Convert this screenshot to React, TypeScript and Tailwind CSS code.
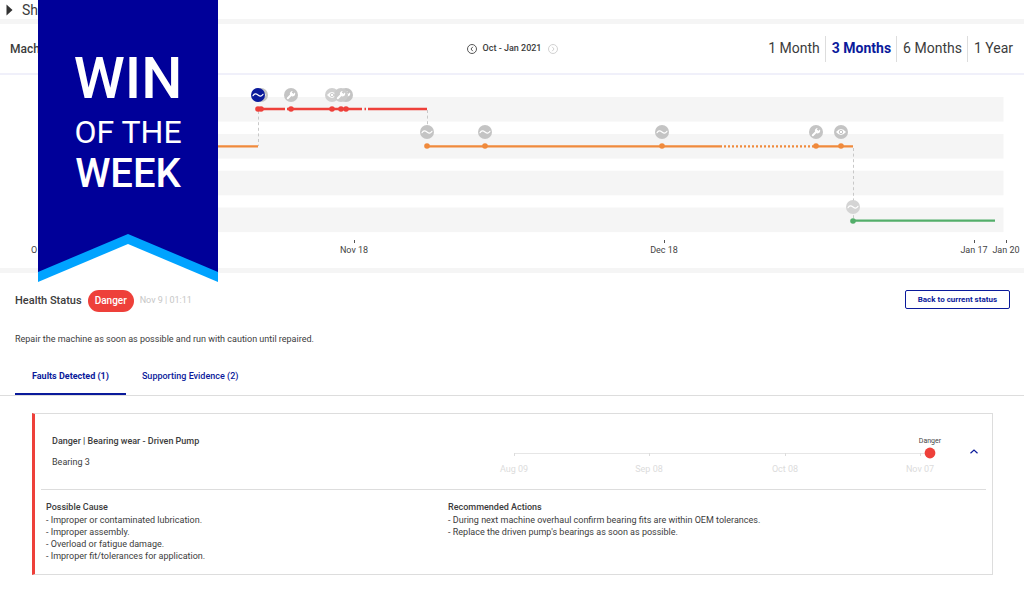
import { useState } from "react";

type MarkerKind = "wave" | "wrench" | "eye";

const RANGES = ["1 Month", "3 Months", "6 Months", "1 Year"];

const MARKERS: { x: number; y: number; kind: MarkerKind; fill: string }[] = [
    { x: 261, y: 20, kind: "eye", fill: "#c4c4c4" },
    { x: 258, y: 20, kind: "wave", fill: "#0a1a9b" },
    { x: 291, y: 20, kind: "wrench", fill: "#c4c4c4" },
    { x: 332, y: 20, kind: "eye", fill: "#d0d0d0" },
    { x: 346, y: 20, kind: "wrench", fill: "#c4c4c4" },
    { x: 341, y: 20, kind: "wrench", fill: "#cbcbcb" },
    { x: 427, y: 57, kind: "wave", fill: "#c4c4c4" },
    { x: 485, y: 57, kind: "wave", fill: "#c4c4c4" },
    { x: 662, y: 57, kind: "wave", fill: "#c4c4c4" },
    { x: 816, y: 57, kind: "wrench", fill: "#c4c4c4" },
    { x: 841, y: 57, kind: "eye", fill: "#c4c4c4" },
    { x: 853, y: 132, kind: "wave", fill: "#d4d4d4" },
];

const POINTS = [
    { x: 258, y: 34, fill: "#ee403a" },
    { x: 261, y: 34, fill: "#ee403a" },
    { x: 291, y: 34, fill: "#ee403a" },
    { x: 332, y: 34, fill: "#ee403a" },
    { x: 341, y: 34, fill: "#ee403a" },
    { x: 346, y: 34, fill: "#ee403a" },
    { x: 427, y: 71, fill: "#f08a3c" },
    { x: 485, y: 71, fill: "#f08a3c" },
    { x: 662, y: 71, fill: "#f08a3c" },
    { x: 816, y: 71, fill: "#f08a3c" },
    { x: 841, y: 71, fill: "#f08a3c" },
    { x: 853, y: 146, fill: "#53ae6a" },
];

const TICKS = [
    { x: 354, label: "Nov 18" },
    { x: 664, label: "Dec 18" },
    { x: 974, label: "Jan 17" },
    { x: 1006, label: "Jan 20" },
];

const FAULT_TICKS = [
    { x: 24, label: "Aug 09" },
    { x: 159, label: "Sep 08" },
    { x: 295, label: "Oct 08" },
    { x: 430, label: "Nov 07" },
];

function Marker({ x, y, kind, fill }: { x: number; y: number; kind: MarkerKind; fill: string }) {
    return (
        <g transform={`translate(${x} ${y})`}>
            <circle r="7" fill={fill} />
            {kind === "wave" && <path d="M-5 .7C-3.6-1.6-2-1.6 0 0S3.6 1.6 5-.7" fill="none" stroke="#fff" strokeWidth="1.2" strokeLinecap="round" />}
            {kind === "wrench" && (
                <>
                    <path d="M-3.2 3.2 1 -1" stroke="#fff" strokeWidth="2" strokeLinecap="round" />
                    <path d="M3.9-2.6A2.7 2.7 0 1 1 1.6-4L.9-2.2 2.1-1Z" fill="#fff" />
                </>
            )}
            {kind === "eye" && (
                <>
                    <path d="M-5 0Q0-6 5 0Q0 6-5 0Z" fill="#fff" />
                    <circle r="1.7" fill="none" stroke={fill} strokeWidth="1" />
                </>
            )}
        </g>
    );
}

function HealthChart() {
    return (
        <svg viewBox="0 0 1024 193" className="block w-full" fontFamily="Roboto, sans-serif" fontSize="9">
            {[22, 59, 95.7, 132.5].map((y) => (
                <rect key={y} x="40" y={y} width="963.5" height="24.6" fill="#f5f5f5" />
            ))}
            <g stroke="#c8c8c8" strokeWidth="1" strokeDasharray="3 2.6">
                <path d="M258.5 36V71" />
                <path d="M427.5 35V50" />
                <path d="M853.5 73V144" />
            </g>
            <g fill="none" strokeWidth="2.3">
                <path d="M40 71.3H258" stroke="#f08a3c" />
                <path d="M258 34H285M287 34H362M364.5 34H366M368 34H427" stroke="#ee403a" />
                <path d="M427 71.3H722M816 71.3H853" stroke="#f08a3c" />
                <path d="M724 71.3H815" stroke="#f08a3c" strokeDasharray="2 2" />
                <path d="M853 145.7H995" stroke="#53ae6a" />
            </g>
            {POINTS.map((p) => (
                <circle key={`${p.x}-${p.y}`} cx={p.x} cy={p.y} r="2.8" fill={p.fill} />
            ))}
            {MARKERS.map((m) => (
                <Marker key={`${m.x}-${m.y}`} {...m} />
            ))}
            <text x="31" y="178" fill="#444">O</text>
            {TICKS.map((t) => (
                <g key={t.label}>
                    <path d={`M${t.x + 0.5} 165V168`} stroke="#555" />
                    <text x={t.x} y="178" fill="#444" textAnchor="middle">{t.label}</text>
                </g>
            ))}
        </svg>
    );
}

function FaultTimeline() {
    return (
        <svg viewBox="0 0 460 50" className="mt-1 block w-[460px]" fontFamily="Roboto, sans-serif" fontSize="9">
            <path d="M24 24.5H440" stroke="#e6e6e6" />
            {FAULT_TICKS.map((t) => (
                <g key={t.label}>
                    <path d={`M${t.x + 0.5} 24V27`} stroke="#dcdcdc" />
                    <text x={t.x} y="43" fill="#dcdcdc" textAnchor="middle">{t.label}</text>
                </g>
            ))}
            <circle cx="440" cy="24" r="5.4" fill="#ee403a" />
            <text x="440" y="14" fill="#444" fontSize="7" textAnchor="middle">Danger</text>
        </svg>
    );
}

function Ribbon() {
    return (
        <div className="absolute left-[38px] top-0 w-[180px]">
            <div className="flex h-[234px] flex-col items-center bg-[#000099] pt-[46px] font-medium text-white">
                <span className="text-[58px] leading-[64px]">WIN</span>
                <span className="text-[32px] leading-[44px] font-normal">OF THE</span>
                <span className="text-[40px] leading-[40px]">WEEK</span>
            </div>
            <svg viewBox="0 0 180 48" className="block w-full">
                <path d="M0 0H180V40H0Z" fill="#000099" />
                <path d="M0 38L90 0L180 38V48H0Z" fill="#00a3ff" />
                <path d="M0 48L90 10L180 48Z" fill="#fff" />
            </svg>
        </div>
    );
}

export default function App() {
    const [range, setRange] = useState("3 Months");
    const [tab, setTab] = useState("faults");
    const [open, setOpen] = useState(true);

    return (
        <div className="relative min-h-screen bg-white font-['Roboto',sans-serif] text-[9px] text-[#3c3c3c]">
            <div className="flex h-[19px] items-center gap-[9px] pl-1.5 text-sm">
                <svg viewBox="0 0 7 12" className="h-3 w-[7px]"><path d="M.5.5 6.5 6 .5 11.5Z" fill="#333" /></svg>
                <span>Sh</span>
            </div>
            <div className="h-[5px] bg-[#f5f5f5]" />

            <header className="grid h-[51px] grid-cols-[1fr_auto_1fr] items-center border-b-2 border-[#f0f0fa]">
                <h1 className="pl-2.5 text-xs font-medium">Mach</h1>
                <div className="flex items-center gap-1.5 font-medium">
                    <button aria-label="Previous period">
                        <svg viewBox="0 0 10 10" className="size-2.5" fill="none" stroke="#444"><circle cx="5" cy="5" r="4.5" strokeWidth=".9" /><path d="M5.8 2.8 4 5l1.8 2.2" strokeWidth=".9" /></svg>
                    </button>
                    <span>Oct - Jan 2021</span>
                    <button aria-label="Next period">
                        <svg viewBox="0 0 10 10" className="size-2.5" fill="none" stroke="#ccc"><circle cx="5" cy="5" r="4.5" strokeWidth=".9" /><path d="M4.2 2.8 6 5 4.2 7.2" strokeWidth=".9" /></svg>
                    </button>
                </div>
                <div className="flex justify-end divide-x divide-[#dddddd] pr-1.5">
                    {RANGES.map((r) => (
                        <button key={r} onClick={() => setRange(r)} className={`h-[26px] pr-[5px] pb-0.5 pl-1.5 text-sm ${r === range ? "font-bold text-[#0a1a9b]" : ""}`}>{r}</button>
                    ))}
                </div>
            </header>

            <HealthChart />
            <div className="h-[5px] bg-[#f5f5f5]" />

            <section>
                <div className="flex h-[56px] items-center gap-1.5 pr-3.5 pl-[15px]">
                    <h2 className="text-[11px] font-medium">Health Status</h2>
                    <span className="rounded-full bg-[#ee403a] px-[7px] text-[10px] leading-[22px] font-medium text-white">Danger</span>
                    <span className="text-[#c6c6c6]">Nov 9 | 01:11</span>
                    <button className="mt-[17px] ml-auto h-[19px] self-start rounded-xs border border-[#0a1a9b] px-3 text-[8px] font-bold text-[#0a1a9b]">Back to current status</button>
                </div>
                <p className="pt-1 pl-[15px] leading-[12px]">Repair the machine as soon as possible and run with caution until repaired.</p>

                <div role="tablist" className="mt-3 flex h-[39px] border-b border-[#dddddd] pl-[15px] text-[#0a1a9b]">
                    <button role="tab" aria-selected={tab === "faults"} onClick={() => setTab("faults")} className={`border-b-2 px-[17px] pt-1 font-bold ${tab === "faults" ? "border-[#0a1a9b]" : "border-transparent"}`}>Faults Detected (1)</button>
                    <button role="tab" aria-selected={tab === "evidence"} onClick={() => setTab("evidence")} className={`border-b-2 px-4 pt-1 font-medium ${tab === "evidence" ? "border-[#0a1a9b]" : "border-transparent"}`}>Supporting Evidence (2)</button>
                </div>

                <article className="mt-[17px] mr-[31px] ml-8 border border-l-[3px] border-[#dddddd] border-l-[#ee403a] px-1.5 pb-3">
                    <div className="flex h-[76px] items-center border-b border-[#dddddd] pr-2 pl-[11px]">
                        <div className="flex-1 leading-[12px]">
                            <h3 className="font-medium">Danger | Bearing wear - Driven Pump</h3>
                            <p className="mt-[9px]">Bearing 3</p>
                        </div>
                        <FaultTimeline />
                        <button aria-label="Toggle fault details" aria-expanded={open} onClick={() => setOpen(!open)} className="ml-5">
                            <svg viewBox="0 0 8 5" className="h-[5px] w-2" fill="none" stroke="#0a1a9b" strokeWidth="1.2"><path d="M.5 4.2 4 1l3.5 3.2" /></svg>
                        </button>
                    </div>
                    {open && (
                        <div className="grid grid-cols-[43%_1fr] px-[5px] pt-[11px] leading-[12px]">
                            <div>
                                <h4 className="pb-px font-medium">Possible Cause</h4>
                                <p>- Improper or contaminated lubrication.</p>
                                <p>- Improper assembly.</p>
                                <p>- Overload or fatigue damage.</p>
                                <p>- Improper fit/tolerances for application.</p>
                            </div>
                            <div>
                                <h4 className="pb-px font-medium">Recommended Actions</h4>
                                <p>- During next machine overhaul confirm bearing fits are within OEM tolerances.</p>
                                <p>- Replace the driven pump's bearings as soon as possible.</p>
                            </div>
                        </div>
                    )}
                </article>
            </section>

            <Ribbon />
        </div>
    );
}
